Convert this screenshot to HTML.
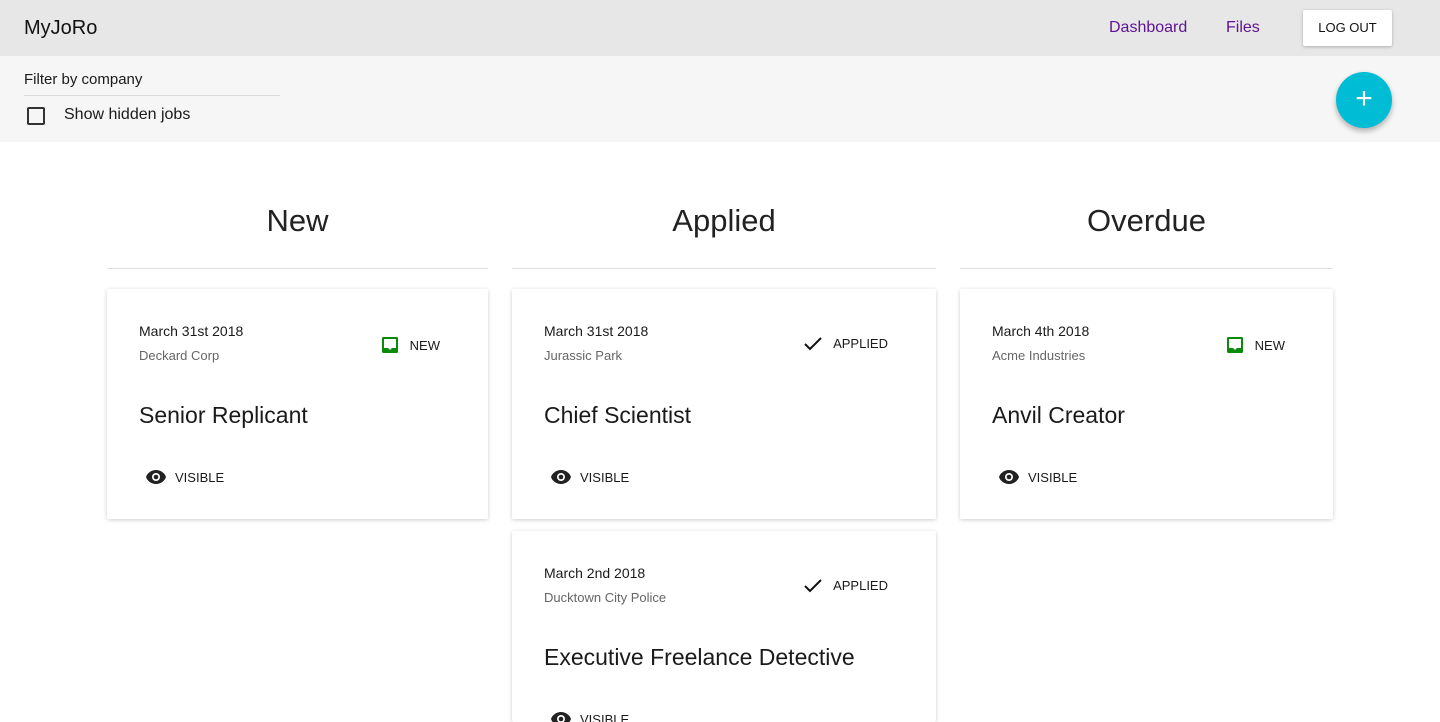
<!DOCTYPE html>
<html style="overflow:hidden;height:722px"><head><style>
*{box-sizing:border-box;margin:0;padding:0}
body{width:1440px;height:722px;overflow:hidden;background:#fff;font-family:"Liberation Sans",Arial,sans-serif;color:#1a1a1a;position:relative}
.hdr{height:56px;background:#e7e7e7;position:relative}
.logo{position:absolute;left:24px;top:17px;font-size:20px;color:#111}
.nav{position:absolute;top:19px;font-size:16px;color:#5e1294}
.btn{position:absolute;left:1303px;top:10px;width:89px;height:36px;background:#fff;box-shadow:0 1px 3px rgba(0,0,0,.25);border-radius:2px;font-size:13px;text-align:center;line-height:36px;color:#111}
.filter{height:86px;background:#f6f6f6;position:relative}
.fl{position:absolute;left:24px;top:15px;font-size:15px}
.fline{position:absolute;left:24px;top:39px;width:256px;height:1px;background:#ddd}
.cb{position:absolute;left:27px;top:51px;width:18px;height:18px;border:2px solid #333;border-radius:2px}
.cbl{position:absolute;left:64px;top:50px;font-size:16px}
.fab{position:absolute;left:1336px;top:16px;width:56px;height:56px;border-radius:50%;background:#00bcd4;box-shadow:0 3px 6px rgba(0,0,0,.3);color:#fff;font-size:30px;text-align:center;line-height:54px}
.col{position:absolute;top:142px}
.col h2{font-weight:normal;font-size:31px;text-align:center;height:127px;line-height:158px;border-bottom:1px solid #ddd;color:#222}
.card{position:absolute;left:0;right:0;height:230px;background:#fff;box-shadow:0 1px 4px rgba(0,0,0,.2);border-radius:2px;overflow:hidden}
.d{position:absolute;left:32px;top:34px;font-size:14px}
.c{position:absolute;left:32px;top:59px;font-size:13px;color:#666}
.t{position:absolute;left:32px;top:113px;font-size:23px;color:#1a1a1a}
.v{position:absolute;left:38px;top:180px;font-size:13px;display:flex;align-items:center}
.v svg{margin-right:8px}
.s{position:absolute;right:48px;top:47px;font-size:13px;display:flex;align-items:center}
.s svg{margin-right:11px}
</style></head><body>
<div class="hdr"><div class="logo">MyJoRo</div><div class="nav" style="left:1109px">Dashboard</div><div class="nav" style="left:1226px">Files</div><div class="btn">LOG OUT</div></div>
<div class="filter"><div class="fl">Filter by company</div><div class="fline"></div><div class="cb"></div><div class="cbl">Show hidden jobs</div><div class="fab">+</div></div>

<div class="col" style="left:107px;width:381px"><h2>New</h2>
<div class="card" style="top:147px"><div class="d">March 31st 2018</div><div class="c">Deckard Corp</div>
<div class="s"><svg width="18" height="18" viewBox="0 0 18 18"><rect x="1" y="1" width="16" height="16" rx="1.5" fill="#0a8a0a"/><path d="M3 3h12v9h-4l-2 2-2-2H3z" fill="#fff"/></svg>NEW</div>
<div class="t">Senior Replicant</div>
<div class="v"><svg width="22" height="16" viewBox="0 0 22 16"><path d="M11 1C6 1 2 4.5 1 8c1 3.5 5 7 10 7s9-3.5 10-7c-1-3.5-5-7-10-7z" fill="#222"/><circle cx="11" cy="8" r="4" fill="#fff"/><circle cx="11" cy="8" r="2.3" fill="#222"/></svg>VISIBLE</div></div>
</div>

<div class="col" style="left:512px;width:424px"><h2>Applied</h2>
<div class="card" style="top:147px"><div class="d">March 31st 2018</div><div class="c">Jurassic Park</div>
<div class="s"><svg width="18" height="14" viewBox="0 0 18 14"><path d="M1 7l5 5L17 1" stroke="#111" stroke-width="2" fill="none"/></svg>APPLIED</div>
<div class="t">Chief Scientist</div>
<div class="v"><svg width="22" height="16" viewBox="0 0 22 16"><path d="M11 1C6 1 2 4.5 1 8c1 3.5 5 7 10 7s9-3.5 10-7c-1-3.5-5-7-10-7z" fill="#222"/><circle cx="11" cy="8" r="4" fill="#fff"/><circle cx="11" cy="8" r="2.3" fill="#222"/></svg>VISIBLE</div></div>
<div class="card" style="top:389px;height:191px"><div class="d">March 2nd 2018</div><div class="c">Ducktown City Police</div>
<div class="s"><svg width="18" height="14" viewBox="0 0 18 14"><path d="M1 7l5 5L17 1" stroke="#111" stroke-width="2" fill="none"/></svg>APPLIED</div>
<div class="t">Executive Freelance Detective</div>
<div class="v"><svg width="22" height="16" viewBox="0 0 22 16"><path d="M11 1C6 1 2 4.5 1 8c1 3.5 5 7 10 7s9-3.5 10-7c-1-3.5-5-7-10-7z" fill="#222"/><circle cx="11" cy="8" r="4" fill="#fff"/><circle cx="11" cy="8" r="2.3" fill="#222"/></svg>VISIBLE</div></div>
</div>

<div class="col" style="left:960px;width:373px"><h2>Overdue</h2>
<div class="card" style="top:147px"><div class="d">March 4th 2018</div><div class="c">Acme Industries</div>
<div class="s"><svg width="18" height="18" viewBox="0 0 18 18"><rect x="1" y="1" width="16" height="16" rx="1.5" fill="#0a8a0a"/><path d="M3 3h12v9h-4l-2 2-2-2H3z" fill="#fff"/></svg>NEW</div>
<div class="t">Anvil Creator</div>
<div class="v"><svg width="22" height="16" viewBox="0 0 22 16"><path d="M11 1C6 1 2 4.5 1 8c1 3.5 5 7 10 7s9-3.5 10-7c-1-3.5-5-7-10-7z" fill="#222"/><circle cx="11" cy="8" r="4" fill="#fff"/><circle cx="11" cy="8" r="2.3" fill="#222"/></svg>VISIBLE</div></div>
</div>
</body></html>
